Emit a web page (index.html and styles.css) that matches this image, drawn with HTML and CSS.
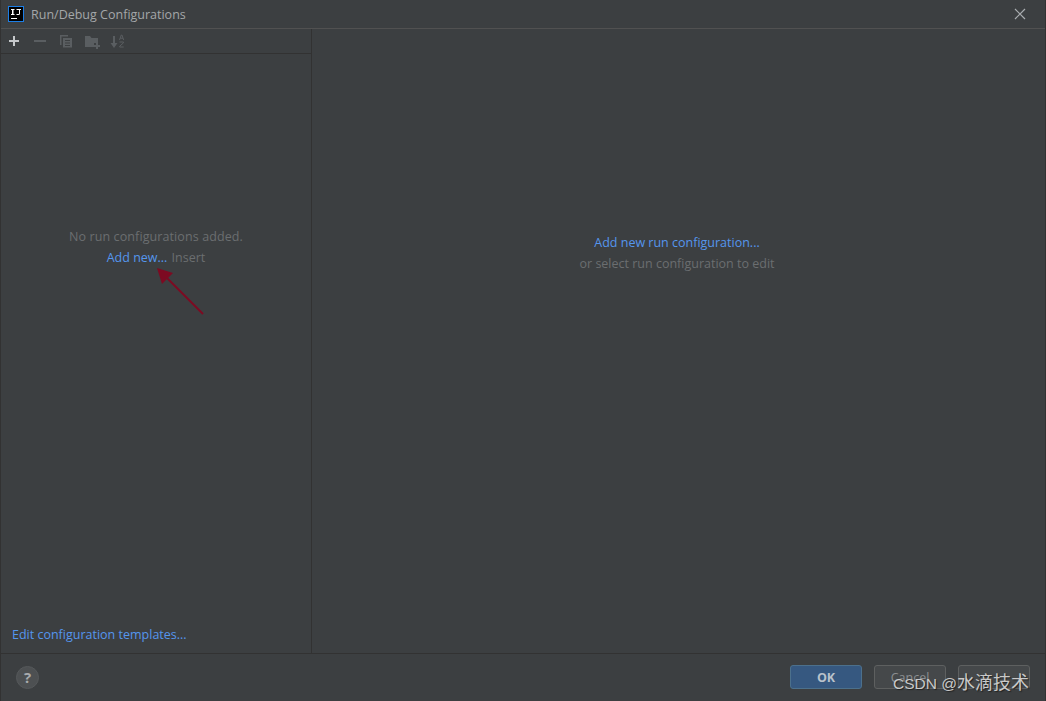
FILE: index.html
```html
<!DOCTYPE html>
<html lang="en">
<head>
  <meta charset="UTF-8">
  <title>Run/Debug Configurations</title>
  <link rel="stylesheet" href="styles.css">
</head>
<body>
  <div class="dialog">
    <header class="titlebar">
      <svg class="logo" width="16" height="16" viewBox="0 0 16 16">
        <rect x="0.5" y="0.5" width="15" height="15" fill="#000" stroke="#1c7ee6"/>
        <rect x="3" y="12" width="6" height="1" fill="#fff"/>
        <path d="M3 3h3.500v1H5.500v4h1v1H3V8h1V4H3zM8.500 3H13v1h-1v3.500Q12 9 10.500 9H8.500V8h2q.5 0 .5-.5V4H8.500z" fill="#fff"/>
      </svg>
      <span class="title">Run/Debug Configurations</span>
      <svg class="close" width="12" height="12" viewBox="0 0 12 12">
        <path d="M1 1l10 10M11 1L1 11" stroke="#a9adb0" stroke-width="1.200" fill="none"/>
      </svg>
    </header>

    <div class="main">
      <aside class="sidebar">
        <div class="toolbar">
          <svg width="16" height="16" viewBox="0 0 16 16"><path d="M7 3h2v4h4v2H9v4H7V9H3V7h4z" fill="#c5c8ca"/></svg>
          <svg width="16" height="16" viewBox="0 0 16 16"><path d="M2 7h12v2H2z" fill="#5a5e61"/></svg>
          <svg width="16" height="16" viewBox="0 0 16 16"><path d="M2 2h8v1.500H3.500V12H2zM5 5h9v9.500H5zM7 7v1h5V7zM7 9.500v1h5v-1zM7 12v1h5v-1z" fill="#5a5e61" fill-rule="evenodd"/></svg>
          <svg width="16" height="16" viewBox="0 0 16 16"><path d="M1 3h5l1.500 2H14v5H10v4H1z" fill="#5a5e61"/><path d="M12 10h2v2h2v2h-2v2h-2v-2h-2v-2h2z" fill="#5a5e61"/></svg>
          <svg width="16" height="16" viewBox="0 0 16 16"><path d="M3 3h2v7h2.500L4 15 .5 10H3z" fill="#5a5e61"/><path d="M9.500 7l1.800-5h.6L13.700 7M10.200 5.200h2.800M9.500 9h4v.8L9.700 13.200v.8h4" stroke="#5a5e61" fill="none"/></svg>
        </div>
        <div class="empty">
          <p class="muted spaced">No run configurations added.</p>
          <p class="add-line"><a class="link add-link">Add new...</a> <span class="muted">Insert</span></p>
        </div>
        <a class="link templates">Edit configuration templates...</a>
        <svg class="arrow" width="52" height="52" viewBox="0 0 52 52">
          <path d="M47 47L10 10" stroke="#7d0a22" stroke-width="2" fill="none"/>
          <path d="M1 1l16 5L6 17z" fill="#7d0a22"/>
        </svg>
      </aside>
      <section class="detail">
        <a class="link">Add new run configuration...</a>
        <p class="muted">or select run configuration to edit</p>
      </section>
    </div>

    <footer class="footer">
      <div class="help">?</div>
      <div class="actions">
        <button class="btn btn-ok">OK</button>
        <button class="btn btn-cancel">Cancel</button>
        <button class="btn"></button>
      </div>
      <span class="watermark"><span class="wm-latin">CSDN @</span>水滴技术</span>
    </footer>
  </div>
</body>
</html>
```

FILE: styles.css
```css
* { margin: 0; padding: 0; box-sizing: border-box; }
html, body { height: 100%; }
body {
  font-family: "Open Sans", "Noto Sans", sans-serif;
  font-size: 12.5px;
  background: #3c3f41;
  color: #bbb;
  overflow: hidden;
}
.dialog {
  height: 701px;
  display: flex;
  flex-direction: column;
  border-left: 1px solid #323232;
  border-right: 1px solid #323232;
}
.titlebar {
  height: 29px;
  flex: none;
  display: flex;
  align-items: center;
  padding: 0 19px 0 7px;
  border-bottom: 1px solid #515151;
}
.logo { margin-right: 7px; }
.title { color: #a4a7a9; }
.close { margin-left: auto; }
.main { flex: 1; display: flex; min-height: 0; }
.sidebar {
  position: relative;
  width: 311px;
  flex: none;
  display: flex;
  flex-direction: column;
  border-right: 1px solid #323232;
}
.toolbar {
  height: 25px;
  flex: none;
  display: flex;
  align-items: center;
  gap: 10px;
  padding: 0 5px;
  border-bottom: 1px solid #323232;
}
.empty {
  height: 0;
  margin-top: 172px;
  text-align: center;
  line-height: 21px;
}
.muted { color: #6b6e70; }
.spaced { letter-spacing: 0.1px; }
.link { color: #5596ee; }
.add-link { margin-right: 1px; }
.templates { margin-top: auto; padding: 0 0 10px 11px; }
.arrow { position: absolute; left: 155px; top: 238px; }
.detail {
  flex: 1;
  text-align: center;
  padding: 203px 3px 0 0;
  line-height: 21px;
  display: flex;
  flex-direction: column;
  align-items: center;
}
.footer {
  position: relative;
  height: 48px;
  flex: none;
  display: flex;
  align-items: center;
  justify-content: space-between;
  padding: 0 15px 1px 15px;
  border-top: 1px solid #323232;
}
.help {
  width: 23px;
  height: 23px;
  border-radius: 50%;
  background: #4d5052;
  border: 1px solid #55585a;
  color: #a8abad;
  font-weight: 700;
  font-size: 15px;
  line-height: 21px;
  text-align: center;
}
.actions { display: flex; gap: 12px; }
.btn {
  width: 72px;
  height: 24px;
  font: inherit;
  color: #a8abad;
  background: #45484a;
  border: 1px solid #5e6060;
  border-radius: 3px;
}
.btn-ok {
  background: #365880;
  border-color: #4c708c;
  color: #b9c2cb;
  font-weight: 700;
}
.btn-cancel { color: #8b8e90; }
.watermark {
  position: absolute;
  right: 16px;
  top: 14px;
  font-family: "Liberation Sans", "Noto Sans CJK SC", sans-serif;
  font-size: 18px;
  color: #c9c9c9;
  text-shadow: 1px 1px 1px #222;
}
.wm-latin { font-size: 15.5px; }
```
